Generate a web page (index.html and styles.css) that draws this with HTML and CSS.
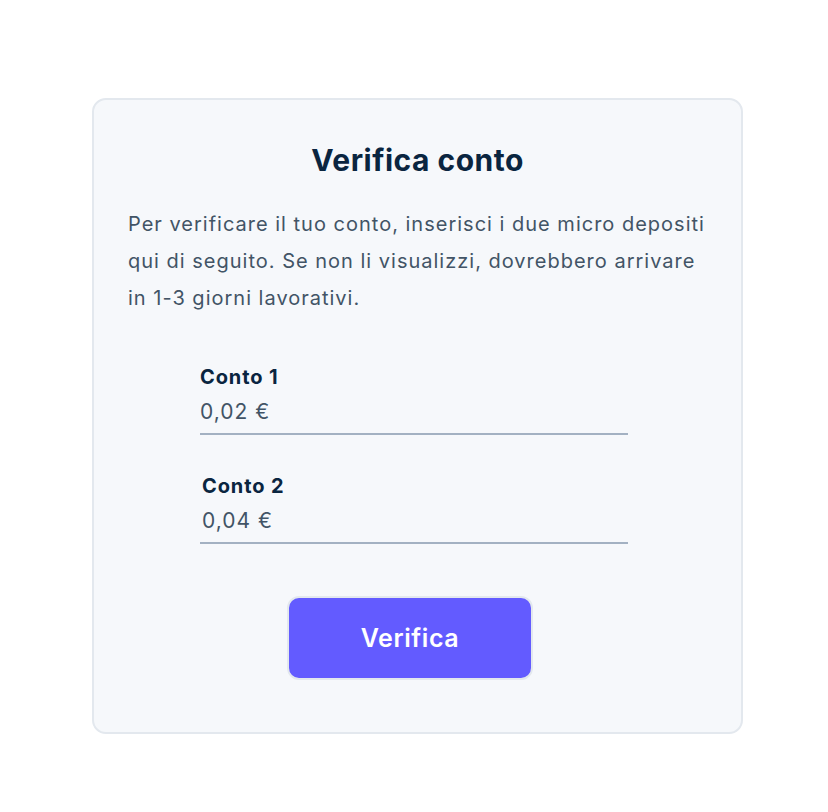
FILE: index.html
```html
<!DOCTYPE html>
<html lang="it">
<head>
    <meta charset="UTF-8">
    <meta name="viewport" content="width=device-width, initial-scale=1.0">
    <title>Verifica conto</title>
    <link rel="stylesheet" href="styles.css">
</head>
<body>

    <div class="card">
        <h2>Verifica conto</h2>
        <p class="intro">Per verificare il tuo conto, inserisci i due micro depositi qui di seguito. Se non li visualizzi, dovrebbero arrivare in 1-3 giorni lavorativi.</p>

        <!-- Deposit fields -->
        <div class="fields">
            <label class="field">
                <span class="label">Conto 1</span>
                <input type="text" value="0,02 €">
            </label>
            <label class="field second">
                <span class="label">Conto 2</span>
                <input type="text" value="0,04 €">
            </label>
        </div>

        <button class="btn">Verifica</button>
    </div>

</body>
</html>
```

FILE: styles.css
```css
/* Page */
body {
    margin: 0;
    background: #ffffff;
    font-family: Inter, 'Noto Sans', sans-serif;
    color: #0a2540;
}

/* Card */
.card {
    width: 579px;
    margin: 98px 0 0 92px;
    padding: 38px 34px 52px;
    background: #f6f8fb;
    border: 2px solid #e3e8ee;
    border-radius: 14px;
}

h2 {
    margin: 0;
    text-align: center;
    font-size: 30px;
    font-weight: 700;
    letter-spacing: 0.5px;
    line-height: 44px;
}

.intro {
    margin: 24px 0 0;
    font-size: 20px;
    line-height: 37px;
    color: #425466;
    letter-spacing: 1px;
}

/* Fields */
.fields {
    width: 428px;
    margin: 45px 0 0 72px;
    display: flex;
    flex-direction: column;
    gap: 36px;
}

.field {
    display: flex;
    flex-direction: column;
}

.field.second .label,
.field.second input {
    padding-left: 2px;
}

.label {
    font-size: 20px;
    font-weight: 700;
    letter-spacing: 0.9px;
    line-height: 30px;
}

input {
    margin: 0;
    padding: 5px 0 6px;
    border: none;
    border-bottom: 2px solid #a3b1c2;
    background: transparent;
    font-family: inherit;
    font-size: 21px;
    line-height: 30px;
    color: #425466;
    letter-spacing: 1px;
    outline: none;
}

/* Button */
.btn {
    display: block;
    width: 246px;
    height: 84px;
    margin: 52px 0 0 159px;
    background: #635bff;
    border: 2px solid #e3e8ee;
    border-radius: 12px;
    color: #ffffff;
    font-family: inherit;
    font-size: 25px;
    font-weight: 600;
    letter-spacing: 0.6px;
}
```
